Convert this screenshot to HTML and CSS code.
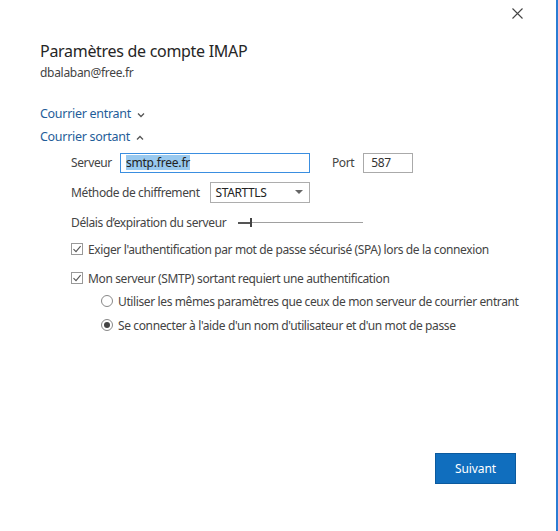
FILE: index.html
```html
<!DOCTYPE html>
<html lang="fr">
<head>
<meta charset="utf-8">
<link rel="stylesheet" href="styles.css">
</head>
<body>
<div class="window">
  <div class="topbar">
    <svg class="close" width="11" height="11" viewBox="0 0 11 11"><path d="M0.5 0.5 L10.5 10.5 M10.5 0.5 L0.5 10.5" stroke="#444" stroke-width="1.1" fill="none"/></svg>
  </div>
  <div class="content">
    <h1 class="title">Paramètres de compte IMAP</h1>
    <div class="email">dbalaban@free.fr</div>

    <div class="section-link first">Courrier entrant
      <svg class="chev" width="8" height="6" viewBox="0 0 8 6"><path d="M1 1.5 L4 4.5 L7 1.5" stroke="#555" stroke-width="1.3" fill="none"/></svg>
    </div>
    <div class="section-link">Courrier sortant
      <svg class="chev" width="8" height="6" viewBox="0 0 8 6"><path d="M1 4.5 L4 1.5 L7 4.5" stroke="#555" stroke-width="1.3" fill="none"/></svg>
    </div>

    <div class="form">
      <div class="row">
        <span class="label">Serveur</span>
        <div class="input server focused"><span class="sel">smtp.free.fr</span></div>
        <span class="label port-label">Port</span>
        <div class="input port">587</div>
      </div>
      <div class="row">
        <span class="label">Méthode de chiffrement</span>
        <div class="select">
          <span>STARTTLS</span>
          <svg width="8" height="5" viewBox="0 0 8 5"><path d="M0 0 L8 0 L4 4 Z" fill="#666"/></svg>
        </div>
      </div>
      <div class="row">
        <span class="label">Délais d’expiration du serveur</span>
        <div class="slider">
          <div class="fill"></div>
          <div class="thumb"></div>
          <div class="track"></div>
        </div>
      </div>
      <div class="check-row">
        <span class="checkbox"><svg width="10" height="10" viewBox="0 0 10 10"><path d="M1.5 5.2 L4 7.6 L8.6 2.2" stroke="#555" stroke-width="1.1" fill="none"/></svg></span>
        <span class="label">Exiger l'authentification par mot de passe sécurisé (SPA) lors de la connexion</span>
      </div>
      <div class="check-row">
        <span class="checkbox"><svg width="10" height="10" viewBox="0 0 10 10"><path d="M1.5 5.2 L4 7.6 L8.6 2.2" stroke="#555" stroke-width="1.1" fill="none"/></svg></span>
        <span class="label">Mon serveur (SMTP) sortant requiert une authentification</span>
      </div>
      <div class="radios">
        <div class="radio-row">
          <span class="radio"></span>
          <span class="label">Utiliser les mêmes paramètres que ceux de mon serveur de courrier entrant</span>
        </div>
        <div class="radio-row">
          <span class="radio checked"><span class="dot"></span></span>
          <span class="label">Se connecter à l'aide d'un nom d'utilisateur et d'un mot de passe</span>
        </div>
      </div>
    </div>

    <div class="footer">
      <button class="next">Suivant</button>
    </div>
  </div>
</div>
</body>
</html>
```

FILE: styles.css
```css
html, body {
  margin: 0;
  padding: 0;
  background: #fff;
}
body {
  font-family: "Noto Sans", "Open Sans", "Liberation Sans", sans-serif;
  color: #444;
  font-size: 12px;
}
.window {
  width: 558px;
  height: 531px;
  box-sizing: border-box;
  border-right: 2px solid #2b7cd3;
  position: relative;
  display: flex;
  flex-direction: column;
}
.topbar {
  height: 30px;
  display: flex;
  justify-content: flex-end;
  align-items: flex-start;
}
.close {
  margin-top: 8px;
  margin-right: 33px;
}
.content {
  padding-left: 40px;
  display: flex;
  flex-direction: column;
  flex: 1;
}
.title {
  font-weight: 400;
  font-size: 16px;
  color: #262626;
  margin: 10px 0 0 0;
  line-height: 22px;
  letter-spacing: -0.3px;
}
.email {
  margin-top: 3px;
  line-height: 16px;
  color: #444;
  letter-spacing: -0.3px;
}
.section-link {
  color: #1f5d99;
  font-size: 12.5px;
  line-height: 18px;
  display: flex;
  align-items: center;
  gap: 6px;
  margin-top: 5px;
  letter-spacing: -0.3px;
}
.section-link.first {
  margin-top: 24px;
}
.chev {
  margin-top: 1px;
}
.form {
  padding-left: 31px;
  display: flex;
  flex-direction: column;
}
.label {
  letter-spacing: -0.38px;
  white-space: nowrap;
}
.row {
  display: flex;
  align-items: center;
  margin-top: 7px;
  height: 21px;
}
.row:first-child {
  margin-top: 6px;
}
.row + .row {
  margin-top: 9px;
}
.input {
  height: 20px;
  box-sizing: border-box;
  border: 1px solid #aaa;
  display: flex;
  align-items: center;
  padding-left: 5px;
  font-size: 12px;
  color: #333;
}
.input.server {
  width: 190px;
  margin-left: 8px;
  border-color: #3a8ee0;
}
.sel {
  background: #99c9ef;
  color: #222;
  line-height: 15px;
  letter-spacing: -0.2px;
}
.port-label {
  margin-left: 22px;
}
.input.port {
  width: 50px;
  margin-left: 9px;
  padding-left: 7px;
  letter-spacing: -0.3px;
}
.select {
  margin-left: 10px;
  width: 100px;
  height: 21px;
  box-sizing: border-box;
  border: 1px solid #adadad;
  display: flex;
  align-items: center;
  justify-content: space-between;
  padding: 0 6px 0 5px;
  color: #222;
  letter-spacing: -0.4px;
}
.slider {
  margin-left: 12px;
  width: 125px;
  height: 10px;
  display: flex;
  align-items: center;
}
.fill {
  width: 12px;
  height: 2px;
  background: #555;
}
.thumb {
  width: 2px;
  height: 9px;
  background: #444;
}
.track {
  flex: 1;
  height: 1px;
  background: #a0a0a0;
}
.check-row {
  display: flex;
  align-items: center;
  gap: 5px;
  height: 18px;
  margin-top: 7px;
}
.check-row + .check-row {
  margin-top: 11px;
}
.checkbox {
  width: 12px;
  height: 12px;
  box-sizing: border-box;
  border: 1px solid #999;
  display: flex;
  align-items: center;
  justify-content: center;
}
.radios {
  padding-left: 30px;
  display: flex;
  flex-direction: column;
}
.radio-row {
  display: flex;
  align-items: center;
  gap: 5px;
  height: 18px;
  margin-top: 5px;
}
.radio-row + .radio-row {
  margin-top: 6px;
}
.radio {
  width: 12px;
  height: 12px;
  box-sizing: border-box;
  border: 1px solid #888;
  border-radius: 50%;
  display: flex;
  align-items: center;
  justify-content: center;
}
.dot {
  width: 6px;
  height: 6px;
  border-radius: 50%;
  background: #444;
}
.footer {
  margin-top: auto;
  margin-bottom: 47px;
  display: flex;
  justify-content: flex-end;
  padding-right: 40px;
}
.next {
  width: 81px;
  height: 31px;
  background: #106ebe;
  border: 1px solid #0b5a9e;
  color: #fff;
  font-family: inherit;
  font-size: 12px;
  letter-spacing: -0.1px;
  padding: 0;
}
```
